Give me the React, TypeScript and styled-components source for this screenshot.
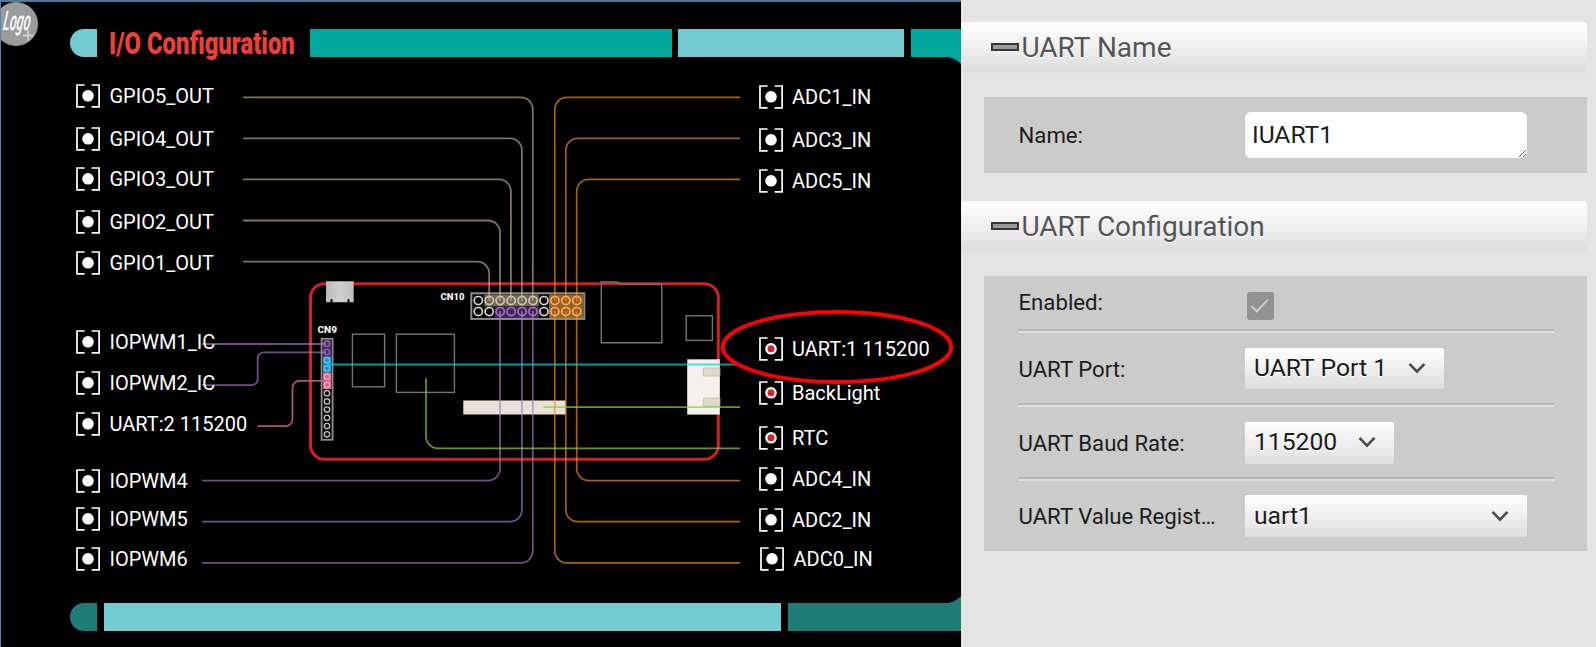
import React from "react";
import styled, { createGlobalStyle } from "styled-components";

const GlobalStyle = createGlobalStyle`
  * { box-sizing: border-box; }
  body { margin: 0; background: #e4e4e4; font-family: Roboto, "Liberation Sans", sans-serif; }
`;

const Page = styled.main`
  display: flex;
  width: 1596px;
  height: 647px;
  overflow: hidden;
`;

/* ---------- board panel ---------- */

const BoardPanel = styled.section`
  position: relative;
  display: flex;
  flex-direction: column;
  flex: 0 0 961px;
  background: #000;
  border-left: 1px solid #4f86b8;
  border-top: 2px solid #4d7499;
  overflow: hidden;
`;

const LogoBadge = styled.svg`
  position: absolute;
  left: -1px;
  top: 0;
  overflow: visible;
`;

const Strip = styled.div<{ $top: number }>`
  display: flex;
  flex: none;
  height: 28px;
  margin-top: ${(p) => p.$top}px;
  padding-left: 69px;
`;

const Segment = styled.div<{ $width?: number; $color: string; $gap?: number; $cap?: boolean }>`
  flex: ${(p) => (p.$width ? `0 0 ${p.$width}px` : "1")};
  margin-left: ${(p) => p.$gap ?? 0}px;
  background: ${(p) => p.$color};
  border-radius: ${(p) => (p.$cap ? "14px 0 0 14px" : 0)};
`;

const TitleSlot = styled.div`
  flex: none;
  width: 212.5px;
  min-width: 0;
  padding-left: 12px;
`;

const Title = styled.h1`
  margin: 0;
  width: max-content;
  font-size: 32px;
  line-height: 28px;
  font-weight: 900;
  color: #ee4036;
  white-space: nowrap;
  transform: scaleX(0.745);
  transform-origin: 0 50%;
`;

const Diagram = styled.div`
  position: relative;
  flex: none;
  height: 546px;
  display: flex;
  justify-content: space-between;
`;

const Wiring = styled.svg`
  position: absolute;
  left: -1px;
  top: 0;
`;

const PinColumn = styled.ul<{ $side: "left" | "right" }>`
  position: relative;
  list-style: none;
  margin: 0;
  padding: ${(p) => (p.$side === "left" ? "0 0 0 75px" : "0")};
  width: ${(p) => (p.$side === "left" ? 300 : 202.5)}px;
`;

const PinRow = styled.li<{ $gap: number; $shift?: number }>`
  display: flex;
  align-items: center;
  gap: 9.5px;
  height: 24px;
  margin-top: ${(p) => p.$gap}px;
  padding-left: ${(p) => p.$shift ?? 0}px;
  color: #fff;
  font-size: 20px;
  line-height: 24px;
  white-space: nowrap;
`;

const Highlight = styled.svg`
  position: absolute;
  left: -1px;
  top: 0;
  pointer-events: none;
`;

type Pin = { label: string; gap: number; used?: boolean; shift?: number };

const leftPins: Pin[] = [
  { label: "GPIO5_OUT", gap: 27 },
  { label: "GPIO4_OUT", gap: 18.5 },
  { label: "GPIO3_OUT", gap: 16.7 },
  { label: "GPIO2_OUT", gap: 18.8 },
  { label: "GPIO1_OUT", gap: 17 },
  { label: "IOPWM1_IC", gap: 55 },
  { label: "IOPWM2_IC", gap: 17 },
  { label: "UART:2 115200", gap: 17 },
  { label: "IOPWM4", gap: 33.5 },
  { label: "IOPWM5", gap: 14 },
  { label: "IOPWM6", gap: 15.5 },
];

const rightPins: Pin[] = [
  { label: "ADC1_IN", gap: 28 },
  { label: "ADC3_IN", gap: 19 },
  { label: "ADC5_IN", gap: 17 },
  { label: "UART:1 115200", gap: 144, used: true },
  { label: "BackLight", gap: 19.5, used: true },
  { label: "RTC", gap: 21, used: true },
  { label: "ADC4_IN", gap: 17.5 },
  { label: "ADC2_IN", gap: 16.5 },
  { label: "ADC0_IN", gap: 15.5, shift: 1.5 },
];

const PinIcon = ({ used }: { used?: boolean }) => (
  <svg width="24" height="24" viewBox="0 0 24 24">
    <g fill="none" stroke="#fff" strokeWidth="1.7">
      <path d="M8.6 1H1v21.8h7.6M15.6 1h7.5v21.8h-7.5" />
    </g>
    <circle cx="12" cy="11.8" r="5.8" fill="#fff" />
    {used && <circle cx="12" cy="11.8" r="3.5" fill="#e01f26" />}
  </svg>
);

const PinList = ({ pins, side }: { pins: Pin[]; side: "left" | "right" }) => (
  <PinColumn $side={side}>
    {pins.map((p) => (
      <PinRow key={p.label} $gap={p.gap} $shift={p.shift}>
        <PinIcon used={p.used} />
        {p.label}
      </PinRow>
    ))}
  </PinColumn>
);

const cn9Colors = ["#4a2468", "#4a2468", "#168fc4", "#168fc4", "#d95f8f", "#d95f8f"];
const cn9Rings = ["#8c6aa8", "#8c6aa8", "#5cc4ee", "#5cc4ee", "#f3a3c0", "#f3a3c0"];

const cn10X = (i: number) => 478.3 + i * 10.94;

const ring = (row: number, col: number) => {
  if (col >= 7) return "#e3b27c";
  if (row === 0 && col >= 1 && col <= 5) return "#cfc5b3";
  if (row === 1 && col >= 2 && col <= 5) return "#9a78b4";
  return "#d6d6d6";
};

const Board = () => (
  <Wiring width="961" height="546" viewBox="0 57 961 546">
    <path d="M944 57H961V64A22 22 0 0 0 944 57Z" fill="#00a79d" />
    <path d="M944 603H961V596A22 22 0 0 1 944 603Z" fill="#1f7d78" />

    <rect x="310.5" y="283.7" width="407.8" height="175.6" rx="14" fill="none" stroke="#d41d25" strokeWidth="3" />

    <defs>
      <linearGradient id="usb" x1="0" x2="1">
        <stop offset="0" stopColor="#b9b9b9" />
        <stop offset="0.5" stopColor="#d0d0d0" />
        <stop offset="1" stopColor="#bdbdbd" />
      </linearGradient>
    </defs>
    <path d="M326 281.3h27.7v21h-4.2v-3h-2v3h-15v-3h-2v3H326z" fill="url(#usb)" />

    <g fill="#eee" fontFamily="Roboto, sans-serif" fontWeight="900" fontSize="9.2">
      <text x="317.5" y="332.8" textLength="19.5" lengthAdjust="spacingAndGlyphs">CN9</text>
      <text x="440.5" y="299.9" textLength="24" lengthAdjust="spacingAndGlyphs">CN10</text>
    </g>

    <g fill="none" stroke="#747474" strokeWidth="1.4">
      <rect x="352.4" y="334.2" width="32.2" height="52.6" />
      <rect x="396.4" y="334.2" width="58" height="58.2" />
      <path d="M601.3 282h15l6 2.3h39.5V342.8h-60.5z" />
      <rect x="686.2" y="315.8" width="26.2" height="24.6" />
    </g>

    <rect x="463.3" y="400.5" width="102.3" height="14" fill="#e8e1d8" />
    <rect x="687.2" y="359.3" width="32.6" height="55.3" fill="#f4f1eb" />
    <path d="M703.3 368h16.5v8h-16.5zM703.3 398.3h16.5v8h-16.5z" fill="#dddac9" stroke="#c5c2b0" strokeWidth="1" />

    <rect x="321.6" y="338.8" width="11" height="101" fill="#000" stroke="#8d8d8d" strokeWidth="1.8" />
    {cn9Colors.map((c, i) => (
      <rect key={i} x="323" y={339.9 + i * 8.2} width="8.4" height="8.3" fill={c} />
    ))}
    {Array.from({ length: 12 }, (_, i) => (
      <circle key={i} cx="327" cy={343.7 + i * 8.24} r="2.7" fill="none" stroke={cn9Rings[i] ?? "#bdbdbd"} strokeWidth="1.4" />
    ))}

    <rect x="471.3" y="293.3" width="113" height="25.6" fill="#000" stroke="#8d8d8d" strokeWidth="2" />
    <rect x="484.3" y="294.5" width="54.5" height="12" fill="#6f6553" />
    <rect x="495" y="306.5" width="44" height="11.5" fill="#46205f" />
    <rect x="549" y="294.5" width="34" height="23.5" fill="#a05e12" />
    {[0, 1].map((row) =>
      Array.from({ length: 10 }, (_, col) => (
        <circle key={`${row}-${col}`} cx={cn10X(col)} cy={300.6 + row * 11} r="4.1" fill="none" stroke={ring(row, col)} strokeWidth="1.7" />
      ))
    )}

    <g fill="none" stroke="#cbb99d" strokeOpacity="0.62" strokeWidth="1.8">
      <path d="M243 97.4H520.8a12 12 0 0 1 12 12V301" />
      <path d="M243 138.4H509.9a12 12 0 0 1 12 12V301" />
      <path d="M243 179.4H498.9a12 12 0 0 1 12 12V301" />
      <path d="M243 220.5H488a12 12 0 0 1 12 12V301" />
      <path d="M243 261.6H477.2a12 12 0 0 1 12 12V301" />
    </g>
    <g fill="none" stroke="#f9941a" strokeOpacity="0.66" strokeWidth="1.7">
      <path d="M740 97.4H566.8a12 12 0 0 0-12 12V301M554.8 311V550.8a12 12 0 0 0 12 12H740" />
      <path d="M740 138.4H577.8a12 12 0 0 0-12 12V301M565.8 311V509.7a12 12 0 0 0 12 12H740" />
      <path d="M740 179.4H588.7a12 12 0 0 0-12 12V301M576.7 311V468.6a12 12 0 0 0 12 12H740" />
    </g>
    <g fill="none" stroke="#a57bc8" strokeOpacity="0.66" strokeWidth="1.8">
      <path d="M202 480.6H488a12 12 0 0 0 12-12V311" />
      <path d="M202 521.7H509.9a12 12 0 0 0 12-12V311" />
      <path d="M202 562.8H520.8a12 12 0 0 0 12-12V311" />
      <path d="M202 344H326" />
      <path d="M202 385.2H251.7a6 6 0 0 0 6-6V358.3a6 6 0 0 1 6-6H326" />
    </g>
    <path d="M258 426.2H285.5a7 7 0 0 0 7-7V387.8a7 7 0 0 1 7-7H326" fill="none" stroke="#c45f88" strokeOpacity="0.9" strokeWidth="1.7" />
    <path d="M327 364.6H736" stroke="#00d5ee" strokeOpacity="0.72" strokeWidth="2" />
    <g fill="none" stroke="#8fd030" strokeOpacity="0.72" strokeWidth="1.7">
      <path d="M543.5 407.2H740" />
      <path d="M426 378.3V436.3a12 12 0 0 0 12 12H740" />
    </g>
  </Wiring>
);

/* ---------- settings panel ---------- */

const Settings = styled.section`
  flex: 1;
  display: flex;
  flex-direction: column;
  padding: 22px 9px 0 0;
  background: #e4e4e4;
`;

const GroupHeader = styled.h2`
  display: flex;
  align-items: center;
  flex: none;
  height: 51px;
  margin: 0;
  padding: 0 0 0 30px;
  gap: 2.5px;
  border-radius: 4px;
  background: linear-gradient(#fff, #f1f1f1 45%, #dedede 95%, #e1e1e1);
  color: #555;
  font-size: 28px;
  font-weight: 400;
  line-height: 51px;
  text-shadow: 0 1px 1px #fff;
`;

const Dash = styled.span`
  width: 28px;
  height: 8px;
  margin-top: -2px;
  border: 2px solid #363636;
  background: #999;
`;

const Group = styled.div<{ $height: number; $after?: number }>`
  flex: none;
  height: ${(p) => p.$height}px;
  margin: 24px 0 ${(p) => p.$after ?? 0}px 23px;
  padding: 0 33.5px 0 34px;
  background: #cbcbcb;
`;

const Field = styled.div<{ $height: number; $ruled?: boolean }>`
  display: flex;
  align-items: center;
  height: ${(p) => p.$height}px;
  ${(p) =>
    p.$ruled &&
    `border-bottom: 2px solid #dfdfdf; box-shadow: inset 0 -2px 0 #b5b5b5;`}
`;

const Label = styled.label<{ $lift?: number }>`
  flex: 0 0 226.5px;
  padding: 0 26px ${(p) => p.$lift ?? 0}px 0.5px;
  overflow: hidden;
  text-overflow: ellipsis;
  white-space: nowrap;
  color: #1c1c1c;
  font-size: 22.2px;
  line-height: 30px;
`;

const NameInput = styled.textarea`
  width: 282.5px;
  height: 46px;
  padding: 5px 7.5px;
  border: 0;
  border-radius: 6px;
  outline: 0;
  resize: both;
  overflow: hidden;
  background: #fff;
  color: #1c1c1c;
  font: 24.6px/35px Roboto, sans-serif;
`;

const CheckMark = styled.span`
  display: grid;
  place-items: center;
  width: 27px;
  height: 27.5px;
  margin: 5px 0 0 2px;
  border-radius: 3px;
  background: #929292;
`;

const SelectBox = styled.button<{ $width: number }>`
  display: flex;
  align-items: center;
  justify-content: space-between;
  width: ${(p) => p.$width}px;
  height: 41.5px;
  padding: 0 18px 1px 9.5px;
  border: 0;
  border-radius: 2px;
  background: linear-gradient(#fff, #dedede);
  color: #1c1c1c;
  font: 24.7px/36px Roboto, sans-serif;
  text-shadow: 0 1px 1px #fff;
`;

const Chevron = () => (
  <svg width="18" height="12" viewBox="0 0 18 12">
    <path d="M1.5 1.8L9 9.6l7.5-7.8" fill="none" stroke="#4c4c4c" strokeWidth="2.6" />
  </svg>
);

const selects = [
  { label: "UART Port:", value: "UART Port 1", width: 199, height: 74 },
  { label: "UART Baud Rate:", value: "115200", width: 149.5, height: 74.5 },
  { label: "UART Value Register:", value: "uart1", width: 282.5, height: 70 },
];

export default function App() {
  return (
    <Page>
      <GlobalStyle />
      <BoardPanel>
        <LogoBadge width="40" height="46" viewBox="0 2 40 46">
          <circle cx="16" cy="24" r="22" fill="#9b9b9b" />
          <text
            transform="translate(2.5 29.5) skewX(-8)"
            fill="#fff"
            fontFamily="Roboto, sans-serif"
            fontStyle="italic"
            fontWeight="500"
            fontSize="27"
            textLength="27"
            lengthAdjust="spacingAndGlyphs"
          >
            Logo
          </text>
          <path d="M28 30.5v10M23 35.5h10" stroke="#d0d0d0" strokeWidth="1.8" />
        </LogoBadge>
        <Strip $top={27}>
          <Segment $width={27} $color="#72cbd0" $cap />
          <TitleSlot>
            <Title>I/O Configuration</Title>
          </TitleSlot>
          <Segment $width={362} $color="#00a79d" />
          <Segment $width={226.3} $color="#72cbd0" $gap={6.7} />
          <Segment $color="#00a79d" $gap={6.7} />
        </Strip>
        <Diagram>
          <Board />
          <PinList pins={leftPins} side="left" />
          <PinList pins={rightPins} side="right" />
          <Highlight width="961" height="546" viewBox="0 57 961 546">
            <ellipse cx="837" cy="347" rx="114.2" ry="35" fill="none" stroke="#f00" strokeWidth="3.9" />
          </Highlight>
        </Diagram>
        <Strip $top={0}>
          <Segment $width={27} $color="#1f7d78" $cap />
          <Segment $width={677} $color="#72cbd0" $gap={7} />
          <Segment $color="#1f7d78" $gap={7} />
        </Strip>
      </BoardPanel>

      <Settings>
        <GroupHeader>
          <Dash />
          UART Name
        </GroupHeader>
        <Group $height={76} $after={28}>
          <Field $height={76}>
            <Label>Name:</Label>
            <NameInput defaultValue="IUART1" spellCheck={false} />
          </Field>
        </Group>
        <GroupHeader>
          <Dash />
          UART Configuration
        </GroupHeader>
        <Group $height={275}>
          <Field $height={56.5} $ruled>
            <Label $lift={2}>Enabled:</Label>
            <CheckMark>
              <svg width="20" height="16" viewBox="0 0 20 16">
                <path d="M1.5 8.2l5.3 5.2L18 1.5" fill="none" stroke="#d4d4d4" strokeWidth="1.8" />
              </svg>
            </CheckMark>
          </Field>
          {selects.map((s, i) => (
            <Field key={s.label} $height={s.height} $ruled={i < 2}>
              <Label>{s.label}</Label>
              <SelectBox $width={s.width}>
                {s.value}
                <Chevron />
              </SelectBox>
            </Field>
          ))}
        </Group>
      </Settings>
    </Page>
  );
}
